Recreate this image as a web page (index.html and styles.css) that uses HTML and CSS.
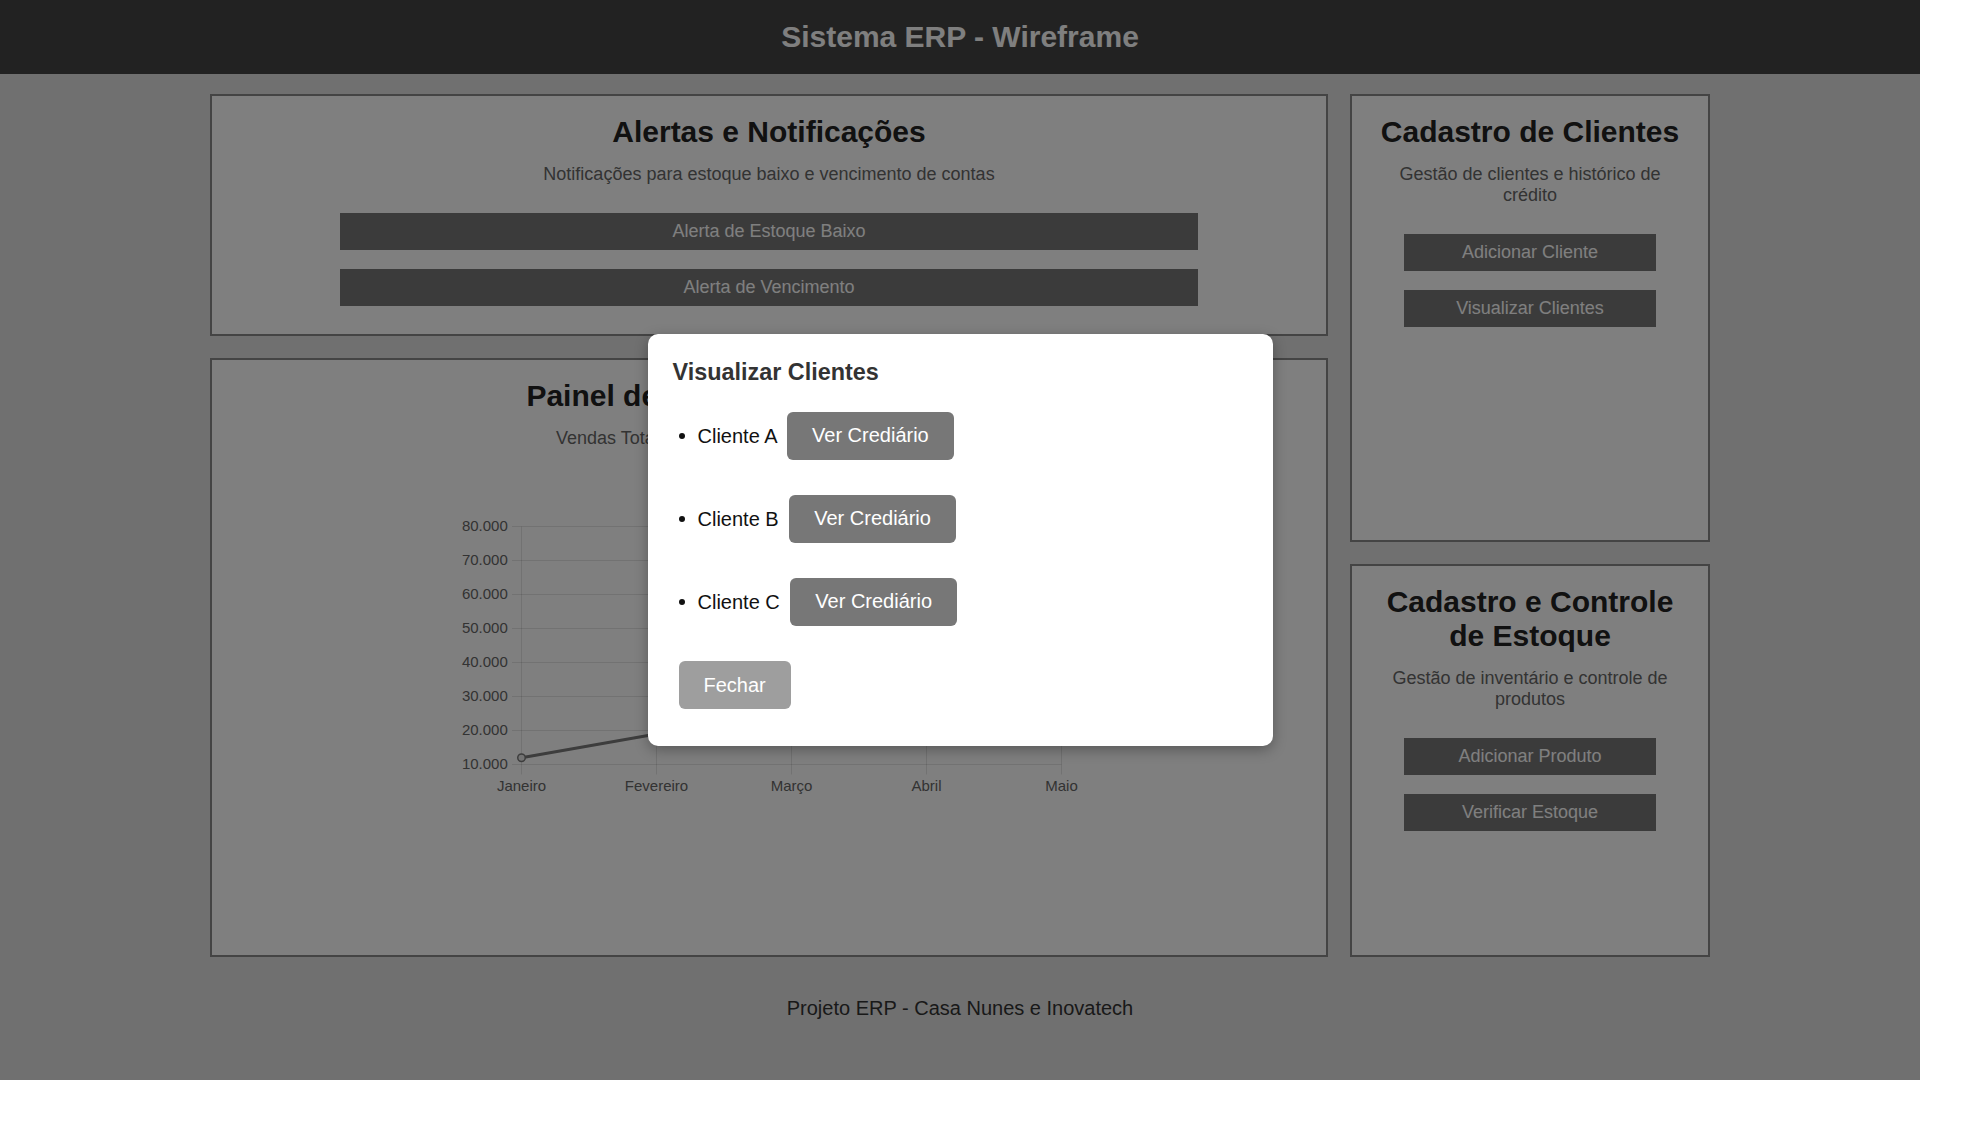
FILE: index.html
```html
<!DOCTYPE html>
<html lang="pt-BR">
<head>
<meta charset="UTF-8">
<title>Sistema ERP - Wireframe</title>
<link rel="stylesheet" href="styles.css">
</head>
<body>
<div class="app">
  <header class="topbar">
    <h1>Sistema ERP - Wireframe</h1>
  </header>

  <main class="grid">
    <section class="card card-alertas">
      <h2>Alertas e Notificações</h2>
      <p>Notificações para estoque baixo e vencimento de contas</p>
      <button class="btn">Alerta de Estoque Baixo</button>
      <button class="btn">Alerta de Vencimento</button>
    </section>

    <section class="card card-painel">
      <h2>Painel de Desempenho de Vendas</h2>
      <p>Vendas Totais, Lucro Líquido e Desempenho Mensal.</p>
      <svg class="chart" width="625" height="320" viewBox="0 0 625 320">
        <g class="legend">
          <rect x="232" y="6" width="50" height="15" class="legend-box"/>
          <text x="294" y="18.5" class="legend-text">Vendas Mensais (R$)</text>
        </g>
        <g class="grid-lines">
          <line x1="55" y1="46.5" x2="604.5" y2="46.5"/>
          <line x1="55" y1="80.5" x2="604.5" y2="80.5"/>
          <line x1="55" y1="114.5" x2="604.5" y2="114.5"/>
          <line x1="55" y1="148.5" x2="604.5" y2="148.5"/>
          <line x1="55" y1="182.5" x2="604.5" y2="182.5"/>
          <line x1="55" y1="216.5" x2="604.5" y2="216.5"/>
          <line x1="55" y1="250.5" x2="604.5" y2="250.5"/>
          <line x1="55" y1="284.5" x2="604.5" y2="284.5"/>
          <line x1="64.5" y1="46.5" x2="64.5" y2="294.5"/>
          <line x1="199.5" y1="46.5" x2="199.5" y2="294.5"/>
          <line x1="334.5" y1="46.5" x2="334.5" y2="294.5"/>
          <line x1="469.5" y1="46.5" x2="469.5" y2="294.5"/>
          <line x1="604.5" y1="46.5" x2="604.5" y2="294.5"/>
        </g>
        <g class="y-labels">
          <text x="50.8" y="50.5">80.000</text>
          <text x="50.8" y="84.5">70.000</text>
          <text x="50.8" y="118.5">60.000</text>
          <text x="50.8" y="152.5">50.000</text>
          <text x="50.8" y="186.5">40.000</text>
          <text x="50.8" y="220.5">30.000</text>
          <text x="50.8" y="254.5">20.000</text>
          <text x="50.8" y="288.5">10.000</text>
        </g>
        <g class="x-labels">
          <text x="64.5" y="311">Janeiro</text>
          <text x="199.5" y="311">Fevereiro</text>
          <text x="334.5" y="311">Março</text>
          <text x="469.5" y="311">Abril</text>
          <text x="604.5" y="311">Maio</text>
        </g>
        <polyline class="series" points="64.5,277.7 199.5,253.9 334.5,216.5 469.5,148.5 604.5,63.5"/>
        <g class="points">
          <circle cx="64.5" cy="277.7" r="3.75"/>
          <circle cx="199.5" cy="253.9" r="3.75"/>
          <circle cx="334.5" cy="216.5" r="3.75"/>
          <circle cx="469.5" cy="148.5" r="3.75"/>
          <circle cx="604.5" cy="63.5" r="3.75"/>
        </g>
      </svg>
    </section>

    <section class="card card-clientes">
      <h2>Cadastro de Clientes</h2>
      <p>Gestão de clientes e histórico de crédito</p>
      <button class="btn">Adicionar Cliente</button>
      <button class="btn">Visualizar Clientes</button>
    </section>

    <section class="card card-estoque">
      <h2>Cadastro e Controle de Estoque</h2>
      <p>Gestão de inventário e controle de produtos</p>
      <button class="btn">Adicionar Produto</button>
      <button class="btn">Verificar Estoque</button>
    </section>
  </main>

  <footer class="footer">
    <p>Projeto ERP - Casa Nunes e Inovatech</p>
  </footer>

  <div class="overlay">
    <div class="modal">
      <h3>Visualizar Clientes</h3>
      <ul class="client-list">
        <li>Cliente A <button class="btn-modal">Ver Crediário</button></li>
        <li>Cliente B <button class="btn-modal">Ver Crediário</button></li>
        <li>Cliente C <button class="btn-modal">Ver Crediário</button></li>
      </ul>
      <button class="btn-fechar">Fechar</button>
    </div>
  </div>
</div>
</body>
</html>
```

FILE: styles.css
```css
* {
  box-sizing: border-box;
}

html,
body {
  margin: 0;
  padding: 0;
  background: #ffffff;
}

body {
  font-family: "Liberation Sans", Arial, Helvetica, sans-serif;
}

.app {
  position: relative;
  width: 1920px;
  height: 1080px;
  background: #e0e0e0;
  overflow: hidden;
  display: flex;
  flex-direction: column;
}

/* Header */
.topbar {
  height: 74px;
  flex: 0 0 74px;
  background: #444444;
  padding-top: 20px;
  text-align: center;
}

.topbar h1 {
  margin: 0;
  font-size: 30px;
  font-weight: bold;
  line-height: normal;
  color: #ffffff;
}

/* Main grid */
.grid {
  display: grid;
  grid-template-columns: 1118px 360px;
  grid-template-rows: 242px 184px 393px;
  grid-template-areas:
    "alertas clientes"
    "painel clientes"
    "painel estoque";
  gap: 22px;
  justify-content: center;
  padding: 20px 0;
}

.card-alertas { grid-area: alertas; }
.card-painel { grid-area: painel; }
.card-clientes { grid-area: clientes; }
.card-estoque { grid-area: estoque; }

.card {
  background: #ffffff;
  border: 2px solid #888888;
  padding: 18.5px 20.5px;
  text-align: center;
}

.card h2 {
  margin: 0 0 15px;
  font-size: 30px;
  font-weight: bold;
  line-height: normal;
  color: #222222;
}

.card p {
  margin: 0 0 28px;
  font-size: 18px;
  line-height: normal;
  color: #666666;
}

.card-painel p {
  margin-bottom: 31.3px;
}

.btn {
  display: block;
  width: 80%;
  margin: 0 auto 18.5px;
  padding: 8.25px 0;
  font-family: inherit;
  font-size: 18px;
  line-height: 21px;
  background: #777777;
  color: #ffffff;
  border: 0;
  border-radius: 0;
}

/* Chart */
.chart {
  display: block;
  margin: 0 auto;
  overflow: visible;
}

.grid-lines line {
  stroke: rgba(0, 0, 0, 0.1);
  stroke-width: 1;
}

.y-labels text,
.x-labels text,
.legend-text {
  font-family: "Liberation Sans", Arial, Helvetica, sans-serif;
  font-size: 15px;
  fill: #666666;
}

.y-labels text {
  text-anchor: end;
}

.x-labels text {
  text-anchor: middle;
}

.legend-box {
  fill: rgba(0, 0, 0, 0.1);
  stroke: #7a7a7a;
  stroke-width: 3;
}

.series {
  fill: none;
  stroke: #7a7a7a;
  stroke-width: 3;
  stroke-linejoin: round;
}

.points circle {
  fill: #e6e6e6;
  stroke: #7a7a7a;
  stroke-width: 1.5;
}

/* Footer */
.footer {
  padding: 20px 0;
  text-align: center;
}

.footer p {
  margin: 0;
  font-size: 20px;
  line-height: normal;
  color: #333333;
}

/* Modal */
.overlay {
  position: absolute;
  inset: 0;
  background: rgba(0, 0, 0, 0.5);
  display: flex;
  align-items: center;
  justify-content: center;
}

.modal {
  width: 625px;
  background: #ffffff;
  border-radius: 10px;
  padding: 25px 25px 37px;
  font-size: 20px;
  box-shadow: 0 4px 14px rgba(0, 0, 0, 0.3);
}

.modal h3 {
  margin: 0 0 26.1px;
  font-size: 23.4px;
  font-weight: bold;
  line-height: normal;
  color: #333333;
}

.client-list {
  margin: 0 0 35.3px;
  padding-left: 25px;
}

.client-list li {
  font-size: 20px;
  line-height: normal;
  color: #111111;
  margin-bottom: 35.1px;
}

.client-list li:last-child {
  margin-bottom: 0;
}

.btn-modal,
.btn-fechar {
  font-family: inherit;
  font-size: 20px;
  line-height: normal;
  padding: 12.5px 25px;
  border: 0;
  border-radius: 6px;
  color: #ffffff;
}

.btn-modal {
  background: #777777;
  margin-left: 5px;
}

.btn-fechar {
  background: #9e9e9e;
  margin-left: 6px;
}
```
